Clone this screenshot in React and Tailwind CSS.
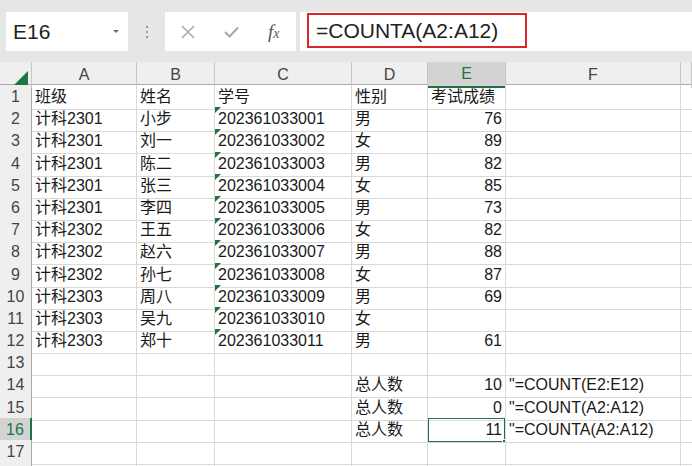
import React from "react";

const cols = ["A", "B", "C", "D", "E", "F", ""];
const grid = "grid grid-cols-[32px_105px_78px_137px_76px_78px_175px_1fr]";

const data = [
  ["班级", "姓名", "学号", "性别", "考试成绩", ""],
  ["计科2301", "小步", "202361033001", "男", "76", ""],
  ["计科2301", "刘一", "202361033002", "女", "89", ""],
  ["计科2301", "陈二", "202361033003", "男", "82", ""],
  ["计科2301", "张三", "202361033004", "女", "85", ""],
  ["计科2301", "李四", "202361033005", "男", "73", ""],
  ["计科2302", "王五", "202361033006", "女", "82", ""],
  ["计科2302", "赵六", "202361033007", "男", "88", ""],
  ["计科2302", "孙七", "202361033008", "女", "87", ""],
  ["计科2303", "周八", "202361033009", "男", "69", ""],
  ["计科2303", "吴九", "202361033010", "女", "", ""],
  ["计科2303", "郑十", "202361033011", "男", "61", ""],
  ["", "", "", "", "", ""],
  ["", "", "", "总人数", "10", "\"=COUNT(E2:E12)"],
  ["", "", "", "总人数", "0", "\"=COUNT(A2:A12)"],
  ["", "", "", "总人数", "11", "\"=COUNTA(A2:A12)"],
  ["", "", "", "", "", ""],
  ["", "", "", "", "", ""],
];

const Cell = ({ value, col, row }) => {
  const isNum = col === 4 && row > 1;
  const isId = col === 2 && row > 1 && row <= 12;
  const selected = col === 4 && row === 16;
  return (
    <div
      className={`relative h-full border-r border-b border-[#d9d9d9] flex items-center ${
        isNum ? "justify-end pr-[3px]" : "pl-[3px]"
      } ${col === 5 ? "overflow-visible whitespace-nowrap" : "overflow-hidden whitespace-nowrap"}`}
    >
      {isId && (
        <span className="absolute left-0 top-0 w-0 h-0 border-t-[6px] border-t-[#1e7145] border-r-[6px] border-r-transparent" />
      )}
      <span className="text-[16px] leading-none text-[#1a1a1a]">{value}</span>
      {selected && (
        <>
          <span className="absolute -left-px -top-px -right-px -bottom-px border-2 border-[#217346]" />
          <span className="absolute -right-[4px] -bottom-[4px] w-[7px] h-[7px] bg-[#217346] border border-white" />
        </>
      )}
    </div>
  );
};

export default function App() {
  return (
    <div className="w-[692px] h-[466px] overflow-hidden bg-white font-['Liberation_Sans','Noto_Sans_CJK_SC',sans-serif] select-none">
      {/* formula bar */}
      <div className="h-[62px] bg-[#e6e6e6] flex items-start pt-[12px] pl-[6px]">
        <div className="w-[122px] h-[39px] bg-white flex items-center pl-[7px] pr-[9px] justify-between">
          <span className="text-[21px] text-[#222]">E16</span>
          <span className="w-0 h-0 border-l-[3px] border-r-[3px] border-t-[3px] border-l-transparent border-r-transparent border-t-[#6e6e6e]" />
        </div>
        <div className="w-[37px] h-[39px] flex flex-col items-center justify-center gap-[3px]">
          <span className="w-[2px] h-[2px] bg-[#9a9a9a]" />
          <span className="w-[2px] h-[2px] bg-[#9a9a9a]" />
          <span className="w-[2px] h-[2px] bg-[#9a9a9a]" />
        </div>
        <div className="w-[131px] h-[39px] bg-white flex items-center pl-[16px] gap-[29px]">
          <svg width="14" height="14" viewBox="0 0 14 14" fill="none" stroke="#a8a8a8" strokeWidth="1.5">
            <path d="M1 1L13 13M13 1L1 13" />
          </svg>
          <svg width="15" height="12" viewBox="0 0 15 12" fill="none" stroke="#a8a8a8" strokeWidth="2">
            <path d="M1 6L5.5 10.5L14 1.5" />
          </svg>
          <span className="font-['Liberation_Serif',serif] italic text-[19px] text-[#555] leading-none">
            f<span className="text-[14px]">x</span>
          </span>
        </div>
        <div className="ml-[4px] flex-1 h-[39px] bg-white pl-[7px] pt-[1px]">
          <div className="w-[220px] h-[35px] border-2 border-[#d9262d] flex items-center pl-[7px]">
            <span className="text-[21px] text-[#222] whitespace-nowrap">=COUNTA(A2:A12)</span>
          </div>
        </div>
      </div>

      {/* column headers */}
      <div className={`${grid} h-[23px] bg-[#efefef] border-b border-[#ababab]`}>
        <div className="border-r border-[#c6c6c6] relative">
          <span className="absolute right-[3px] bottom-[3px] w-0 h-0 border-l-[14px] border-l-transparent border-b-[14px] border-b-[#217346]" />
        </div>
        {cols.map((c, i) => (
          <div
            key={i}
            className={`flex items-center justify-center text-[16px] border-r ${
              c === "E"
                ? "bg-[#d3d3d3] text-[#217346] border-[#c6c6c6] border-b-2 border-b-[#217346]"
                : "text-[#444] border-[#c6c6c6]"
            }`}
          >
            {c}
          </div>
        ))}
      </div>

      {/* rows */}
      {data.map((r, ri) => {
        const rowNum = ri + 1;
        const sel = rowNum === 16;
        return (
          <div key={ri} className={`${grid} h-[22.2px]`}>
            <div
              className={`flex items-center justify-center text-[16px] border-b border-[#d4d4d4] ${
                sel
                  ? "bg-[#d3d3d3] text-[#217346] border-r-2 border-r-[#217346]"
                  : "bg-[#efefef] text-[#444] border-r border-r-[#ababab]"
              }`}
            >
              {rowNum <= 17 ? rowNum : ""}
            </div>
            {r.map((v, ci) => (
              <Cell key={ci} value={v} col={ci} row={rowNum} />
            ))}
            <div className="border-b border-[#d9d9d9]" />
          </div>
        );
      })}
    </div>
  );
}
